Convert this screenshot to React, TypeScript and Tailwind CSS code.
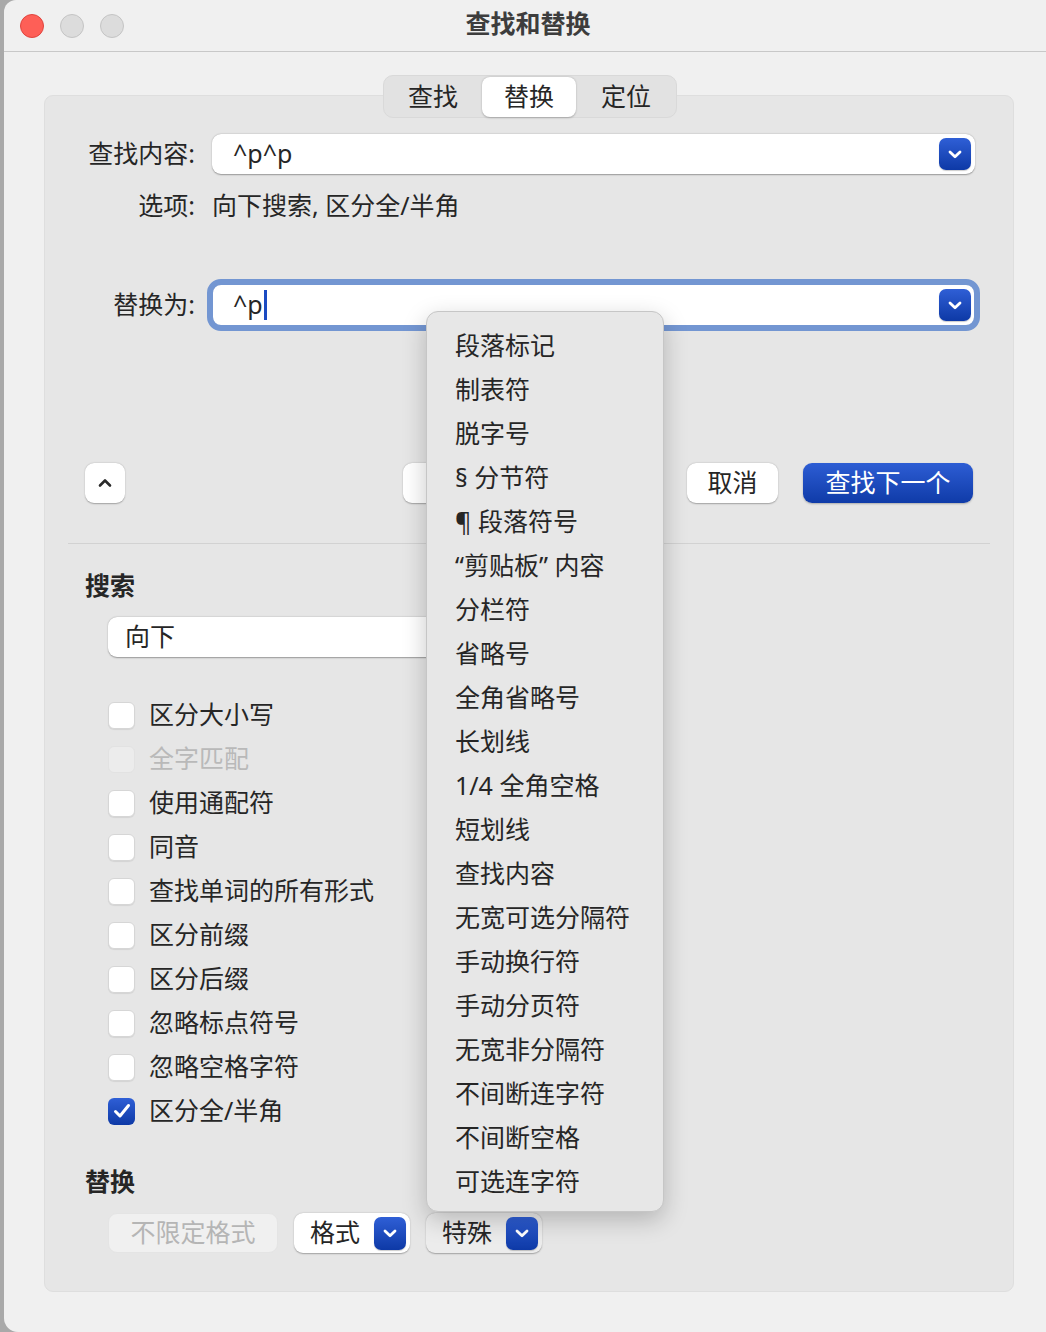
import React from "react";

const FONT = "font-['Noto_Sans','Noto_Sans_CJK_SC',sans-serif]";

const menuItems = [
  "段落标记",
  "制表符",
  "脱字号",
  "§ 分节符",
  "¶ 段落符号",
  "“剪贴板” 内容",
  "分栏符",
  "省略号",
  "全角省略号",
  "长划线",
  "1/4 全角空格",
  "短划线",
  "查找内容",
  "无宽可选分隔符",
  "手动换行符",
  "手动分页符",
  "无宽非分隔符",
  "不间断连字符",
  "不间断空格",
  "可选连字符",
];

const options: { label: string; checked?: boolean; disabled?: boolean }[] = [
  { label: "区分大小写" },
  { label: "全字匹配", disabled: true },
  { label: "使用通配符" },
  { label: "同音" },
  { label: "查找单词的所有形式" },
  { label: "区分前缀" },
  { label: "区分后缀" },
  { label: "忽略标点符号" },
  { label: "忽略空格字符" },
  { label: "区分全/半角", checked: true },
];

/* blue square chevron used by the popup fields */
function BlueChevron({ size = "w-[32px] h-[32px]" }: { size?: string }) {
  return (
    <div
      className={`${size} rounded-[7px] bg-linear-to-b from-[#2f5fd6] to-[#0d39a6] flex items-center justify-center shrink-0 shadow-[0_1px_1px_rgba(0,0,0,0.2)]`}
    >
      <svg width="18" height="18" viewBox="0 0 18 18" fill="none">
        <path
          d="M4 7 9 11.8 14 7"
          stroke="white"
          strokeWidth="2.8"
          strokeLinecap="round"
          strokeLinejoin="round"
        />
      </svg>
    </div>
  );
}

function Checkbox({ checked, disabled }: { checked?: boolean; disabled?: boolean }) {
  if (checked) {
    return (
      <div className="w-[27px] h-[27px] rounded-[6px] bg-linear-to-b from-[#2f5fd6] to-[#0d39a6] flex items-center justify-center">
        <svg width="22" height="22" viewBox="0 0 22 22" fill="none">
          <path
            d="M4.5 11.5 9 16 17.5 5.5"
            stroke="white"
            strokeWidth="3"
            strokeLinecap="round"
            strokeLinejoin="round"
          />
        </svg>
      </div>
    );
  }
  return (
    <div
      className={`w-[27px] h-[27px] rounded-[6px] ${
        disabled
          ? "bg-[#ececec] border border-[#e2e2e2]"
          : "bg-white border border-[#d6d6d6] shadow-[0_1px_1px_rgba(0,0,0,0.08)]"
      }`}
    />
  );
}

export default function App() {
  return (
    <div className={`relative w-[1046px] h-[1332px] bg-[#a9a9a9] overflow-hidden ${FONT}`}>
      {/* Window */}
      <div className="ml-[4px] h-[1332px] w-[1060px] bg-[#f0f0f0] rounded-tl-[12px] rounded-bl-[14px] flex flex-col">
        {/* Title bar */}
        <div className="h-[52px] grid grid-cols-[1fr_auto_1fr] items-center border-b border-[#c8c8c8] shrink-0">
          <div className="flex items-center gap-[16px] pl-[16px]">
            <div className="w-[24px] h-[24px] rounded-full bg-[#fe5f57] border border-[#e0443e]" />
            <div className="w-[24px] h-[24px] rounded-full bg-[#dcdcdc] border border-[#c4c4c4]" />
            <div className="w-[24px] h-[24px] rounded-full bg-[#dcdcdc] border border-[#c4c4c4]" />
          </div>
          <div className="text-[25px] font-bold text-[#3d3d3d] -ml-[12px] mb-[4px]">查找和替换</div>
          <div />
        </div>

        {/* Tabs */}
        <div className="relative z-10 mt-[23px] ml-[379px] w-[294px] h-[43px] rounded-[10px] bg-[#e2e2e2] border border-[#d9d9d9] flex items-center text-[25px] text-[#262626]">
          <div className="w-[98px] h-full flex items-center justify-center">查找</div>
          <div className="w-[94px] h-[40px] bg-white rounded-[8px] flex items-center justify-center shadow-[0_0.5px_2px_rgba(0,0,0,0.25)]">
            替换
          </div>
          <div className="w-[100px] h-full flex items-center justify-center">定位</div>
        </div>

        {/* Group panel */}
        <div className="-mt-[23px] ml-[40px] w-[970px] bg-[#e6e6e6] border border-[#dedede] rounded-[9px] pt-[38px] pb-[38px] text-[#262626]">
          {/* Find what */}
          <div className="flex items-center h-[40px]">
            <div className="w-[150px] text-right text-[25px]">查找内容:</div>
            <div className="ml-[17px] w-[763px] h-[40px] bg-white rounded-[9px] shadow-[0_0.5px_1.5px_rgba(0,0,0,0.35)] flex items-center pl-[21px] pr-[4px]">
              <span className="flex-1 text-[25px]">^p^p</span>
              <BlueChevron />
            </div>
          </div>

          {/* Options */}
          <div className="mt-[14px] flex items-center h-[36px] text-[25px]">
            <div className="w-[150px] text-right">选项:</div>
            <div className="ml-[17px]">向下搜索, 区分全/半角</div>
          </div>

          {/* Replace with */}
          <div className="mt-[61px] flex items-center h-[40px]">
            <div className="w-[150px] text-right text-[25px]">替换为:</div>
            <div className="ml-[18px] w-[761px] h-[40px] bg-white rounded-[8px] outline-[6px] outline-solid outline-[#7396d2] flex items-center pl-[20px] pr-[3px]">
              <span className="flex-1 flex items-center text-[25px]">
                ^p
                <span className="inline-block w-[3px] h-[30px] bg-[#1b4bc2] ml-[1px]" />
              </span>
              <BlueChevron />
            </div>
          </div>

          {/* Action buttons */}
          <div className="mt-[138px] flex items-center pl-[40px] pr-[40px]">
            <div className="w-[40px] h-[40px] rounded-[9px] bg-white flex items-center justify-center shadow-[0_0.5px_1.5px_rgba(0,0,0,0.3)]">
              <svg width="18" height="18" viewBox="0 0 18 18" fill="none">
                <path
                  d="M4 11.5 9 6.5l5 5"
                  stroke="#2a2a2a"
                  strokeWidth="2.6"
                  strokeLinecap="round"
                  strokeLinejoin="round"
                />
              </svg>
            </div>
            <div className="ml-auto flex items-center">
              {/* these two sit under the open menu */}
              <div className="w-[130px] h-[40px] rounded-[9px] bg-white shadow-[0_0.5px_1.5px_rgba(0,0,0,0.3)]" />
              <div className="ml-[16px] w-[110px] h-[40px] rounded-[9px] bg-white shadow-[0_0.5px_1.5px_rgba(0,0,0,0.3)]" />
              <div className="ml-[28px] w-[91px] h-[40px] rounded-[9px] bg-white flex items-center justify-center text-[25px] shadow-[0_0.5px_1.5px_rgba(0,0,0,0.3)]">
                取消
              </div>
              <div className="ml-[25px] w-[170px] h-[40px] rounded-[9px] bg-linear-to-b from-[#2d5dd4] to-[#0f3ba8] text-white text-[25px] flex items-center justify-center shadow-[0_1px_2px_rgba(0,0,0,0.25)]">
                查找下一个
              </div>
            </div>
          </div>

          {/* Divider */}
          <div className="mt-[40px] mx-[23px] h-px bg-[#d2d2d2]" />

          {/* Search section */}
          <div className="mt-[24px] ml-[40px] h-[36px] flex items-center text-[25px] font-bold">搜索</div>
          <div className="mt-[13px] ml-[63px] w-[420px] h-[40px] bg-white rounded-[9px] shadow-[0_0.5px_1.5px_rgba(0,0,0,0.35)] flex items-center pl-[17px] text-[25px]">
            向下
          </div>

          <div className="mt-[36px] ml-[63px] flex flex-col">
            {options.map((o) => (
              <div key={o.label} className="h-[44px] flex items-center">
                <Checkbox checked={o.checked} disabled={o.disabled} />
                <span
                  className={`ml-[14px] text-[25px] ${o.disabled ? "text-[#b9b9b9]" : "text-[#262626]"}`}
                >
                  {o.label}
                </span>
              </div>
            ))}
          </div>

          {/* Replace section */}
          <div className="mt-[31px] ml-[40px] h-[36px] flex items-center text-[25px] font-bold">替换</div>
          <div className="mt-[13px] ml-[63px] flex items-center text-[25px]">
            <div className="w-[170px] h-[40px] rounded-[9px] bg-[#f0f0f0] border border-[#e4e4e4] flex items-center justify-center text-[#b5b5b5]">
              不限定格式
            </div>
            <div className="ml-[16px] w-[116px] h-[40px] rounded-[9px] bg-white shadow-[0_0.5px_1.5px_rgba(0,0,0,0.3)] flex items-center pl-[16px] pr-[4px]">
              <span className="flex-1">格式</span>
              <BlueChevron size="w-[32px] h-[33px]" />
            </div>
            <div className="ml-[16px] w-[116px] h-[40px] rounded-[9px] bg-[#ececec] shadow-[0_0.5px_1.5px_rgba(0,0,0,0.3)] flex items-center pl-[16px] pr-[4px]">
              <span className="flex-1">特殊</span>
              <BlueChevron size="w-[32px] h-[33px]" />
            </div>
          </div>
        </div>
      </div>

      {/* Popup menu (open) */}
      <div className="absolute left-[426px] top-[311px] w-[238px] h-[901px] bg-[#e7e7e7] border border-[#c6c6c6] rounded-[12px] shadow-[0_8px_24px_rgba(0,0,0,0.22)] pt-[12px] pl-[28px] text-[25px] text-[#262626]">
        {menuItems.map((m) => (
          <div key={m} className="h-[44px] flex items-center whitespace-nowrap">
            {m}
          </div>
        ))}
      </div>
    </div>
  );
}
